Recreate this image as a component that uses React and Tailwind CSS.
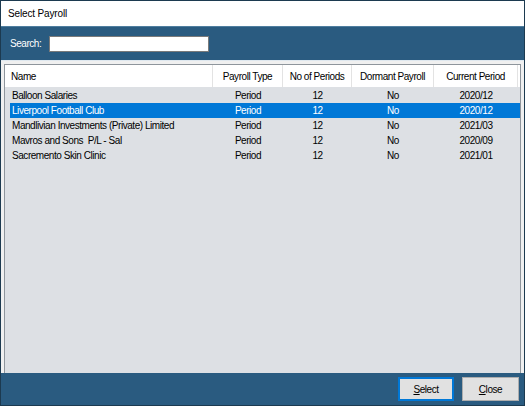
import React from 'react';

const columns = [
    { key: 'name', label: 'Name', width: 'w-[208px]', align: 'left' },
    { key: 'type', label: 'Payroll Type', width: 'w-[70px]', align: 'center' },
    { key: 'periods', label: 'No of Periods', width: 'w-[69px]', align: 'center' },
    { key: 'dormant', label: 'Dormant Payroll', width: 'w-[82px]', align: 'center' },
    { key: 'current', label: 'Current Period', width: 'w-[84px]', align: 'center' },
];

const payrolls = [
    { name: 'Balloon Salaries', type: 'Period', periods: '12', dormant: 'No', current: '2020/12' },
    { name: 'Liverpool Football Club', type: 'Period', periods: '12', dormant: 'No', current: '2020/12' },
    { name: 'Mandlivian Investments (Private) Limited', type: 'Period', periods: '12', dormant: 'No', current: '2021/03' },
    { name: 'Mavros and Sons  P/L - Sal', type: 'Period', periods: '12', dormant: 'No', current: '2020/09' },
    { name: 'Sacremento Skin Clinic', type: 'Period', periods: '12', dormant: 'No', current: '2021/01' },
];

const selectedIndex = 1;

const DialogButton = ({ children, focused }) => (
    <button
        className={`h-[24px] bg-[#e1e1e1] text-black text-[10px] tracking-[-0.45px] flex items-center justify-center ${
            focused ? 'w-[56px] border-2 border-[#0078d7]' : 'w-[57px] border border-[#adadad]'
        }`}
    >
        {children}
    </button>
);

export default function App() {
    return (
        <div
            className="w-[525px] h-[406px] border border-[#1c3a50] bg-[#2a5b80] flex flex-col text-black"
            style={{ fontFamily: '"Liberation Sans", Arial, sans-serif' }}
        >
            {/* title bar */}
            <div className="h-[25px] bg-white flex items-center pl-[7px] text-[10px] tracking-[-0.15px]">
                Select Payroll
            </div>

            {/* search band */}
            <div className="h-[34px] border-t border-[#4f7e9f] flex items-center pl-[9px] gap-[8px]">
                <span className="text-white text-[10px] tracking-[-0.45px]">Search:</span>
                <input
                    type="text"
                    className="w-[160px] h-[16px] bg-white border border-[#7a7a7a] outline-none text-[10px] px-[2px]"
                />
            </div>

            {/* list panel */}
            <div className="flex-1 bg-[#f0f0f0] border-t border-[#dfe8ef] pt-[3px] px-[3px] flex flex-col">
                <div className="flex-1 border border-b-0 border-[#8e959c] bg-[#dde0e4] flex flex-col text-[10px] tracking-[-0.45px]">
                    <div className="h-[22px] bg-white flex shrink-0">
                        {columns.map((col) => (
                            <div
                                key={col.key}
                                className={`${col.width} h-full border-r border-[#e3e3e3] flex items-center ${
                                    col.align === 'left' ? 'pl-[6px]' : 'justify-center'
                                }`}
                            >
                                {col.label}
                            </div>
                        ))}
                    </div>
                    <div className="pt-[1px]">
                        {payrolls.map((row, i) => (
                            <div
                                key={row.name}
                                className={`h-[15px] ml-[5px] w-[510px] flex items-center ${
                                    i === selectedIndex ? 'bg-[#0078d7] text-white' : ''
                                }`}
                            >
                                <div className="w-[203px] pl-[2px] whitespace-pre">{row.name}</div>
                                <div className="w-[70px] text-center">{row.type}</div>
                                <div className="w-[69px] text-center">{row.periods}</div>
                                <div className="w-[82px] text-center">{row.dormant}</div>
                                <div className="w-[84px] text-center">{row.current}</div>
                            </div>
                        ))}
                    </div>
                </div>
            </div>

            {/* buttons */}
            <div className="h-[32px] flex justify-end items-start pt-[4px] pr-[5px] gap-[8px]">
                <DialogButton focused>
                    <span className="underline">S</span>elect
                </DialogButton>
                <DialogButton>
                    <span className="underline">C</span>lose
                </DialogButton>
            </div>
        </div>
    );
}
